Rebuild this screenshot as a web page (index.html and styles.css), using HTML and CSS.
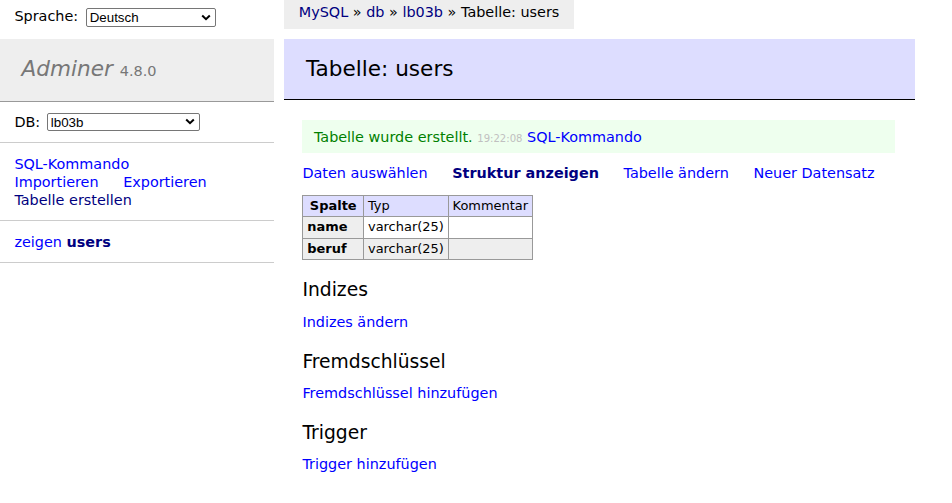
FILE: index.html
```html
<!DOCTYPE html>
<html lang="de">
<head>
<meta charset="utf-8">
<title>Tabelle: users - lb03b - Adminer</title>
<link rel="stylesheet" href="styles.css">
</head>
<body>
<div class="page">
  <header class="topbar">
    <form class="lang">Sprache: <span class="sel sel-lang"><select><option>Deutsch</option></select><svg class="chev" width="10" height="7" viewBox="0 0 10 7"><path d="M1.2 1.5 5 5.2 8.8 1.5" fill="none" stroke="#000" stroke-width="2"/></svg></span></form>
    <p class="breadcrumb"><a href="#" class="vis">MySQL</a> » <a href="#" class="vis">db</a> » <a href="#" class="vis">lb03b</a> » Tabelle: users</p>
  </header>
  <div class="main">
    <nav class="menu">
      <h1><a href="#" class="h1link">Adminer</a> <span class="version">4.8.0</span></h1>
      <form class="dbs">DB: <span class="sel sel-db"><select><option>lb03b</option></select><svg class="chev" width="10" height="7" viewBox="0 0 10 7"><path d="M1.2 1.5 5 5.2 8.8 1.5" fill="none" stroke="#000" stroke-width="2"/></svg></span></form>
      <p class="links menu-links"><a href="#">SQL-Kommando</a><br><a href="#">Importieren</a> <a href="#">Exportieren</a><br><a href="#" class="vis">Tabelle erstellen</a></p>
      <ul class="tables"><li><a href="#">zeigen</a> <a href="#" class="vis active">users</a></li></ul>
    </nav>
    <main class="content">
      <h2>Tabelle: users</h2>
      <div class="message">Tabelle wurde erstellt. <span class="time">19:22:08</span> <a href="#">SQL-Kommando</a></div>
      <p class="links"><a href="#">Daten auswählen</a> <a href="#" class="vis active">Struktur anzeigen</a> <a href="#">Tabelle ändern</a> <a href="#">Neuer Datensatz</a></p>
      <table class="struct">
        <thead><tr><th>Spalte</th><td>Typ</td><td>Kommentar</td></tr></thead>
        <tbody>
          <tr><th>name</th><td>varchar(25)</td><td></td></tr>
          <tr class="even"><th>beruf</th><td>varchar(25)</td><td></td></tr>
        </tbody>
      </table>
      <h3>Indizes</h3>
      <p class="links"><a href="#">Indizes ändern</a></p>
      <h3>Fremdschlüssel</h3>
      <p class="links"><a href="#">Fremdschlüssel hinzufügen</a></p>
      <h3>Trigger</h3>
      <p class="links"><a href="#">Trigger hinzufügen</a></p>
    </main>
  </div>
</div>
</body>
</html>
```
FILE: styles.css
```css
html, body { margin: 0; padding: 0; background: #fff; }
body {
  color: #000;
  font: 14.4px/1.25 "DejaVu Sans", Verdana, sans-serif;
}
a { color: blue; text-decoration: none; }
a.vis { color: navy; }
.active { font-weight: bold; }

.topbar {
  display: flex;
  align-items: flex-start;
  height: calc(2em + 10px);
}
.lang {
  box-sizing: border-box;
  width: calc(21em - 18px);
  margin: 0;
  padding: .3em 1em;
  line-height: 1.8em;
}
.breadcrumb {
  margin: 0;
  white-space: nowrap;
  background: #eee;
  height: 2em;
  line-height: 1.8em;
  padding: 0 1em;
}

.sel { position: relative; display: inline-block; vertical-align: middle; }
.sel select {
  appearance: none;
  -webkit-appearance: none;
  display: block;
  box-sizing: border-box;
  height: 19px;
  margin: 0;
  padding: 0 0 0 3px;
  border: 1px solid #767676;
  border-radius: 2px;
  background: #fff;
  color: #000;
  font: 13.33px "Liberation Sans", Arial, sans-serif;
}
.sel-lang { margin-left: 3px; }
.sel-lang select { width: 130px; }
.sel-db { margin-left: 2px; vertical-align: top; }
.sel-db select { width: 153px; height: 18px; }
.chev { position: absolute; right: 5px; top: 6px; pointer-events: none; }
.sel-db .chev { top: 5px; }

.main { display: flex; align-items: flex-start; }
.menu { width: 19em; flex: none; }
.menu h1 {
  font-size: 150%;
  line-height: 26px;
  margin: 0;
  padding: .8em 1em;
  border-bottom: 1px solid #999;
  font-weight: normal;
  color: #777;
  background: #eee;
}
.h1link { color: #777; font-style: italic; }
.version { color: #777; font-size: 67%; }
.dbs, .menu-links, .tables {
  margin: 0;
  padding: .8em 1em;
  border-bottom: 1px solid #ccc;
}
.menu .dbs { padding: 11px 1em 11px; line-height: 18px; }
.tables { list-style: none; }
.tables li { margin: 0; padding: 0; }

.content {
  margin-left: calc(2em - 18px);
  padding: 0 20px 20px 18px;
}
.content h2 {
  font-size: 150%;
  line-height: 26px;
  margin: 0 0 20px -18px;
  padding: .8em 1em;
  border-bottom: 1px solid #000;
  color: #000;
  font-weight: normal;
  background: #ddf;
}
.message {
  padding: .5em .8em;
  margin: 1em 20px 0 0;
  color: green;
  background: #efe;
}
.time { color: silver; font-size: 70%; }
p { margin: .8em 20px 0 0; }
.links a { white-space: nowrap; margin-right: 20px; }
.menu-links a { margin-right: 20px; }

.struct {
  margin: 1em 20px 0 0;
  border-collapse: collapse;
  font-size: 90%;
}
.struct td, .struct th {
  border: 1px solid #999;
  padding: 2px .3em;
  text-align: left;
}
.struct th { background: #eee; }
.struct thead th { text-align: center; padding: 2px .5em; }
.struct thead td, .struct thead th { background: #ddf; }
.struct tr.even td { background: #eee; }
.content h3 {
  font-weight: normal;
  font-size: 130%;
  line-height: 23px;
  margin: 1em 0 0;
}
```
